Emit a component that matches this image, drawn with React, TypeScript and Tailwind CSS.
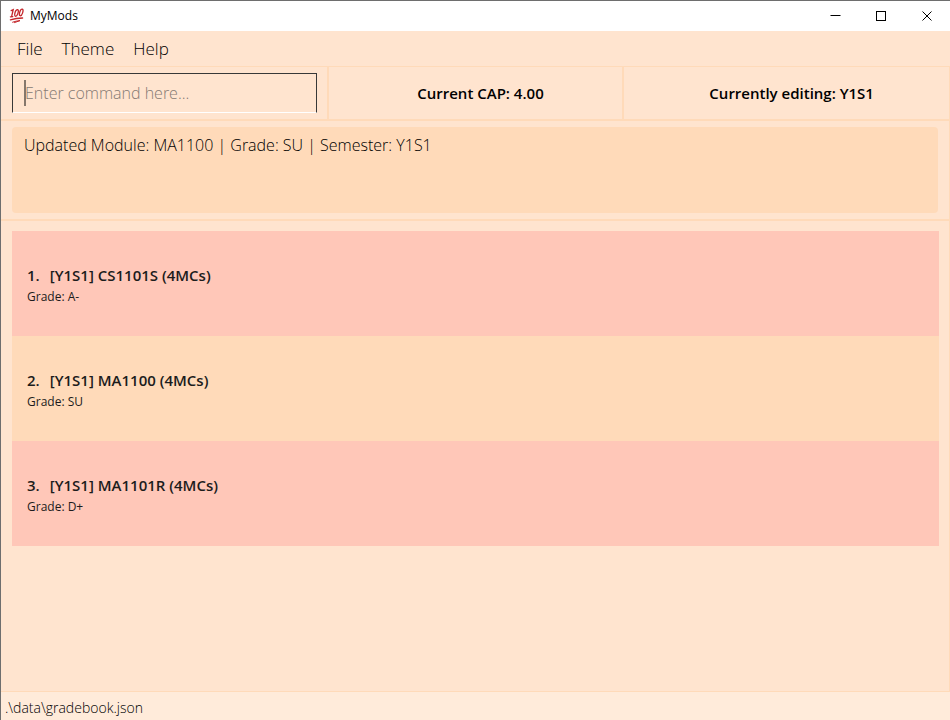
import type { ReactNode } from "react";

interface Module {
  semester: string;
  code: string;
  credits: number;
  grade: string;
}

const modules: Module[] = [
  { semester: "Y1S1", code: "CS1101S", credits: 4, grade: "A-" },
  { semester: "Y1S1", code: "MA1100", credits: 4, grade: "SU" },
  { semester: "Y1S1", code: "MA1101R", credits: 4, grade: "D+" },
];

function HundredIcon() {
  return (
    <svg width="16" height="16" viewBox="0 0 16 16" fill="none" stroke="#c4262b" strokeLinecap="round" aria-hidden="true">
      <path d="M2.2 2.6 L4.2 1.6 L2.6 8.6 M1.4 8.8 L3.8 8.6" strokeWidth="1.3" />
      <ellipse cx="7.5" cy="4.9" rx="1.5" ry="3.5" transform="rotate(18 7.5 4.9)" strokeWidth="1.3" />
      <ellipse cx="12.2" cy="4.4" rx="1.5" ry="3.5" transform="rotate(18 12.2 4.4)" strokeWidth="1.3" />
      <path d="M1.4 11.8 Q7 10.2 13.6 10" strokeWidth="1.3" />
      <path d="M3.6 14.2 Q7 12.9 11 12.6 L5.5 14.6" strokeWidth="1" />
    </svg>
  );
}

function WindowButton({ label, children }: { label: string; children: ReactNode }) {
  return (
    <button type="button" aria-label={label} className="flex h-full w-[46px] items-center justify-center">
      <svg width="11" height="11" viewBox="0 0 11 11" fill="none" stroke="#000000" aria-hidden="true">
        {children}
      </svg>
    </button>
  );
}

function TitleBar() {
  return (
    <header className="flex h-[30px] items-center bg-white pl-2">
      <HundredIcon />
      <h1 className="ml-[5px] text-xs text-black">MyMods</h1>
      <div className="ml-auto flex h-full">
        <WindowButton label="Minimize">
          <path d="M0.5 4.5 H10.5" />
        </WindowButton>
        <WindowButton label="Maximize">
          <rect x="0.5" y="0.5" width="9" height="9" />
        </WindowButton>
        <WindowButton label="Close">
          <path d="M0.5 0.5 L9.5 9.5 M9.5 0.5 L0.5 9.5" />
        </WindowButton>
      </div>
    </header>
  );
}

export default function App() {
  return (
    <div className="flex min-h-screen flex-col border-t border-l border-[#6e6e6e] bg-[#ffe4cf] font-['Open_Sans','Noto_Sans',sans-serif] text-[#1c1c1c]">
      <TitleBar />
      <nav className="flex h-[35px] items-center gap-[19px] px-4 text-[17px] font-light text-black">
        <button type="button">File</button>
        <button type="button">Theme</button>
        <button type="button">Help</button>
      </nav>

      <div className="flex grow flex-col border-t border-r border-[#ffdab9]">
        <section className="grid grid-cols-[328fr_296fr_325fr] border-b-2 border-[#ffdab9]">
          <div className="relative border-r-2 border-[#ffdab9] py-1.5 pr-2.5 pl-[11px]">
            <input
              type="text"
              aria-label="Command"
              placeholder="Enter command here..."
              className="block h-10 w-full border border-t-[#383838] border-r-[#383838] border-b-white border-l-[#383838] bg-transparent px-3 text-base font-light outline-none placeholder:text-[#857a73]"
            />
            <span aria-hidden="true" className="absolute top-[13px] left-[23px] h-[26px] w-0.5 bg-[#85776c]" />
          </div>
          <p className="flex items-center justify-center border-r-2 border-[#ffdab9] pl-2.5 text-[15px] font-semibold text-black">
            Current CAP: 4.00
          </p>
          <p className="flex items-center justify-center pl-2.5 text-[15px] font-semibold text-black">
            Currently editing: Y1S1
          </p>
        </section>

        <section className="border-b-2 border-[#ffdab9] px-[11px] pt-1.5 pb-1.5">
          <output className="block h-[86px] rounded-sm bg-[#ffdab9] px-3 pt-1.5 text-base font-light text-black">
            Updated Module: MA1100 | Grade: SU | Semester: Y1S1
          </output>
        </section>

        <ul className="grow px-[11px] py-2.5 pr-2.5">
          {modules.map((module, index) => (
            <li key={module.code} className="h-[105px] px-[15px] pt-8 odd:bg-[#ffc7b8] even:bg-[#ffdab9]">
              <h2 className="flex gap-2.5 text-[15px] leading-6 font-semibold">
                <span>{index + 1}.</span>
                <span>
                  [{module.semester}] {module.code} ({module.credits}MCs)
                </span>
              </h2>
              <p className="text-xs leading-5">Grade: {module.grade}</p>
            </li>
          ))}
        </ul>
      </div>

      <footer className="h-[29px] border-t border-[#ffdab9] bg-[#ffebda] px-1 pt-1 text-sm leading-6 font-light text-black">
        .\data\gradebook.json
      </footer>
    </div>
  );
}
